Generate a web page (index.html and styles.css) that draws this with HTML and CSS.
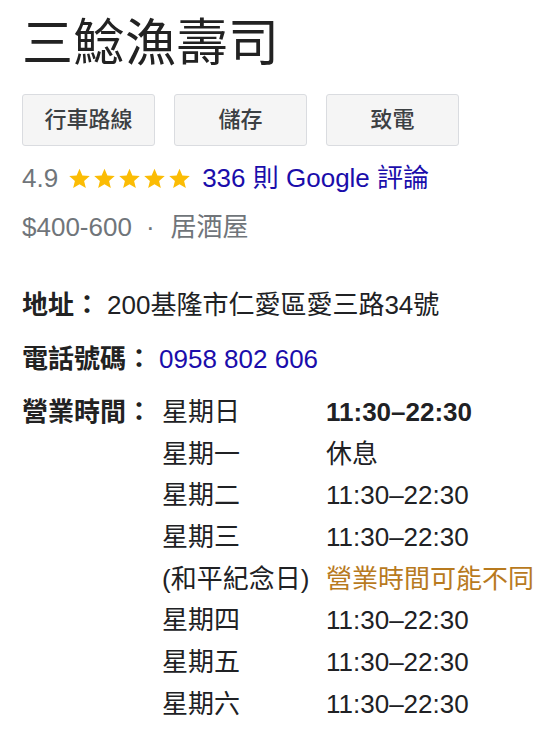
FILE: index.html
```html
<!DOCTYPE html>
<html lang="zh-Hant">
<head>
<meta charset="utf-8">
<title>三鯰漁壽司</title>
<link rel="stylesheet" href="styles.css">
</head>
<body>
<div class="panel">
  <h1 class="title">三鯰漁壽司</h1>
  <div class="actions">
    <button class="btn">行車路線</button>
    <button class="btn">儲存</button>
    <button class="btn">致電</button>
  </div>
  <div class="rating">
    <span class="score">4.9</span>
    <span class="stars">
      <svg viewBox="0 0 24 24"><path d="M12 1.8l3 7.1 7.7.6-5.9 5 1.8 7.5L12 18l-6.6 4 1.8-7.5-5.9-5 7.7-.6z"/></svg>
      <svg viewBox="0 0 24 24"><path d="M12 1.8l3 7.1 7.7.6-5.9 5 1.8 7.5L12 18l-6.6 4 1.8-7.5-5.9-5 7.7-.6z"/></svg>
      <svg viewBox="0 0 24 24"><path d="M12 1.8l3 7.1 7.7.6-5.9 5 1.8 7.5L12 18l-6.6 4 1.8-7.5-5.9-5 7.7-.6z"/></svg>
      <svg viewBox="0 0 24 24"><path d="M12 1.8l3 7.1 7.7.6-5.9 5 1.8 7.5L12 18l-6.6 4 1.8-7.5-5.9-5 7.7-.6z"/></svg>
      <svg viewBox="0 0 24 24"><path d="M12 1.8l3 7.1 7.7.6-5.9 5 1.8 7.5L12 18l-6.6 4 1.8-7.5-5.9-5 7.7-.6z"/></svg>
    </span>
    <a class="link" href="#">336 則 Google 評論</a>
  </div>
  <div class="meta">$400-600<span class="dot">·</span>居酒屋</div>

  <div class="info first"><span class="label">地址：</span><span>200基隆市仁愛區愛三路34號</span></div>
  <div class="info"><span class="label">電話號碼：</span><a class="link" href="#">0958 802 606</a></div>

  <div class="hours">
    <span class="label">營業時間：</span>
    <div class="table">
      <span class="day">星期日</span><span class="time today">11:30–22:30</span>
      <span class="day">星期一</span><span class="time">休息</span>
      <span class="day">星期二</span><span class="time">11:30–22:30</span>
      <span class="day">星期三</span><span class="time">11:30–22:30</span>
      <span class="day">(和平紀念日)</span><span class="time warn">營業時間可能不同</span>
      <span class="day">星期四</span><span class="time">11:30–22:30</span>
      <span class="day">星期五</span><span class="time">11:30–22:30</span>
      <span class="day">星期六</span><span class="time">11:30–22:30</span>
    </div>
  </div>
</div>
</body>
</html>
```

FILE: styles.css
```css
html, body {
  margin: 0;
  padding: 0;
  background: #fff;
}
body {
  font-family: "Liberation Sans", Arial, "Noto Sans CJK TC", sans-serif;
  font-size: 26px;
  color: #202124;
}
.panel {
  padding: 9px 22px 0 22px;
}
.title {
  margin: 0;
  font-family: "Noto Sans CJK TC", sans-serif;
  font-weight: 400;
  font-size: 51px;
  line-height: 60px;
  color: #222;
  letter-spacing: 0.5px;
}
.actions {
  display: flex;
  gap: 19px;
  margin-top: 25px;
}
.btn {
  width: 133px;
  height: 52px;
  background: #f5f5f5;
  border: 1px solid #dadce0;
  border-radius: 3px;
  font-family: "Liberation Sans", "Noto Sans CJK TC", sans-serif;
  font-size: 22px;
  font-weight: 500;
  color: #3c4043;
  padding: 0 0 7px 0;
}
.rating, .meta {
  line-height: 49px;
  height: 49px;
}
.rating {
  margin-top: 8px;
  display: flex;
  align-items: center;
}
.score {
  color: #70757a;
  margin-right: 10px;
}
.stars {
  display: flex;
  gap: 2px;
  margin-right: 11px;
}
.stars svg {
  width: 23px;
  height: 23px;
  fill: #fbbc04;
}
.link {
  color: #1a0dab;
  text-decoration: none;
}
.meta {
  color: #70757a;
}
.dot {
  margin: 0 16px 0 14px;
}
.info {
  line-height: 54px;
}
.info.first {
  margin-top: 26px;
}
.label {
  font-weight: 700;
  color: #222;
  font-family: "Liberation Sans", "Noto Sans CJK TC", sans-serif;
}
.info .label {
  margin-right: 7px;
}
.hours {
  display: flex;
  margin-top: 6px;
}
.hours .label {
  width: 140px;
  line-height: 41.7px;
  flex: none;
}
.table {
  display: grid;
  grid-template-columns: 164px auto;
  grid-auto-rows: 41.7px;
  line-height: 41.7px;
}
.day, .time {
  white-space: nowrap;
}
.today {
  font-weight: 700;
}
.warn {
  color: #b87a1e;
}
```
